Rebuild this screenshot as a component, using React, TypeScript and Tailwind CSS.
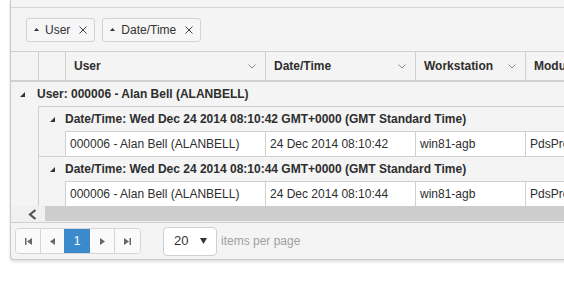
import React from "react";

const Collapse = () => (
  <svg width="5" height="5" viewBox="0 0 5 5" className="shrink-0">
    <polygon points="5,0 5,5 0,5" fill="#333" />
  </svg>
);

const Chevron = () => (
  <svg width="8" height="5" viewBox="0 0 8 5" className="shrink-0">
    <polyline points="0.5,0.5 4,4 7.5,0.5" fill="none" stroke="#8a8a8a" strokeWidth="1" />
  </svg>
);

const Chip = ({ label }: { label: string }) => (
  <div className="flex items-center h-[24px] px-[7px] border border-[#d3d3d3] rounded-[3px] bg-[#f6f6f6] text-[#333]">
    <svg width="5" height="3" viewBox="0 0 5 3" className="shrink-0">
      <polygon points="2.5,0 5,3 0,3" fill="#333" />
    </svg>
    <span className="ml-[6px] text-[12px]">{label}</span>
    <svg width="8" height="8" viewBox="0 0 8 8" className="ml-[9px] shrink-0">
      <path d="M0.5 0.5 L7.5 7.5 M7.5 0.5 L0.5 7.5" stroke="#444" strokeWidth="1" />
    </svg>
  </div>
);

const HeaderCell = ({ label, w }: { label: string; w: string }) => (
  <div className={`${w} flex items-center justify-between pl-[8px] pr-[9px] border-r border-[#d0d0d0] font-bold`}>
    <span>{label}</span>
    <Chevron />
  </div>
);

const DataRow = ({ time }: { time: string }) => (
  <div className="ml-[26px] h-[25px] flex bg-white border-l border-t border-[#d0d0d0]">
    <div className="w-[200px] shrink-0 flex items-center pl-[4px] border-r border-[#d0d0d0]">000006 - Alan Bell (ALANBELL)</div>
    <div className="w-[150px] shrink-0 flex items-center pl-[4px] border-r border-[#d0d0d0]">{time}</div>
    <div className="w-[110px] shrink-0 flex items-center pl-[4px] border-r border-[#d0d0d0]">win81-agb</div>
    <div className="flex-1 flex items-center pl-[4px]">PdsProcess</div>
  </div>
);

const SubGroup = ({ label }: { label: string }) => (
  <div className="h-[25px] flex items-center pl-[11px] border-t border-[#d0d0d0] font-bold">
    <Collapse />
    <span className="ml-[10px] whitespace-nowrap">{label}</span>
  </div>
);

const PagerBtn = ({ children, w, last }: { children: React.ReactNode; w: string; last?: boolean }) => (
  <div className={`${w} h-full flex items-center justify-center bg-[#fafafa] ${last ? "" : "border-r border-[#d5d5d5]"}`}>
    {children}
  </div>
);

export default function App() {
  return (
    <div className="w-[564px] h-[288px] overflow-hidden bg-white font-['Liberation_Sans',Arial,sans-serif] text-[12px] text-[#2e2e2e]">
      <div className="ml-[10px] w-[620px] bg-[#f4f4f4] border-l border-b border-[#c8c8c8] rounded-bl-[4px] shadow-[0_2px_3px_rgba(0,0,0,0.12)]">
        <div className="h-[8px] border-b border-[#d5d5d5]" />
        <div className="h-[43px] flex items-center gap-[7px] pl-[15px]">
          <Chip label="User" />
          <Chip label="Date/Time" />
        </div>
        <div className="h-[31px] flex border-t border-b-2 border-[#d0d0d0]">
          <div className="w-[28px] shrink-0 border-r border-[#d0d0d0]" />
          <div className="w-[27px] shrink-0 border-r border-[#d0d0d0]" />
          <HeaderCell label="User" w="w-[200px] shrink-0" />
          <HeaderCell label="Date/Time" w="w-[150px] shrink-0" />
          <HeaderCell label="Workstation" w="w-[110px] shrink-0" />
          <div className="flex-1 flex items-center pl-[8px] font-bold">Module</div>
        </div>
        <div className="h-[24px] flex items-center pl-[9px] font-bold">
          <Collapse />
          <span className="ml-[12px]">User: 000006 - Alan Bell (ALANBELL)</span>
        </div>
        <div className="ml-[27px] border-l border-[#d0d0d0]">
          <SubGroup label="Date/Time: Wed Dec 24 2014 08:10:42 GMT+0000 (GMT Standard Time)" />
          <DataRow time="24 Dec 2014 08:10:42" />
          <SubGroup label="Date/Time: Wed Dec 24 2014 08:10:44 GMT+0000 (GMT Standard Time)" />
          <DataRow time="24 Dec 2014 08:10:44" />
        </div>
        <div className="h-[16px] flex bg-[#f0f0f0]">
          <div className="w-[34px] shrink-0 flex items-center pl-[17px]">
            <svg width="9" height="11" viewBox="0 0 9 11">
              <polyline points="7.5,1 2,5.5 7.5,10" fill="none" stroke="#505050" strokeWidth="2.2" />
            </svg>
          </div>
          <div className="flex-1 bg-[#cdcdcd] mb-[1px]" />
        </div>
        <div className="h-[37px] flex items-center border-t border-[#d0d0d0] pl-[4px]">
          <div className="h-[26px] flex border border-[#d5d5d5] rounded-[4px] overflow-hidden">
            <PagerBtn w="w-[25px]">
              <svg width="7" height="7" viewBox="0 0 7 7">
                <rect x="0" y="0" width="1.5" height="7" fill="#666" />
                <polygon points="7,0 7,7 2,3.5" fill="#666" />
              </svg>
            </PagerBtn>
            <PagerBtn w="w-[23px]" last>
              <svg width="5" height="7" viewBox="0 0 5 7">
                <polygon points="5,0 5,7 0,3.5" fill="#666" />
              </svg>
            </PagerBtn>
            <div className="w-[26px] h-full flex items-center justify-center bg-[#3b8bcc] text-white">1</div>
            <PagerBtn w="w-[25px]">
              <svg width="5" height="7" viewBox="0 0 5 7">
                <polygon points="0,0 0,7 5,3.5" fill="#666" />
              </svg>
            </PagerBtn>
            <PagerBtn w="w-[25px]" last>
              <svg width="7" height="7" viewBox="0 0 7 7">
                <polygon points="0,0 0,7 5,3.5" fill="#666" />
                <rect x="5.5" y="0" width="1.5" height="7" fill="#666" />
              </svg>
            </PagerBtn>
          </div>
          <div className="ml-[22px] w-[54px] h-[29px] flex items-center justify-between pl-[10px] pr-[9px] bg-white border border-[#d0d0d0] rounded-[4px] text-[13px] text-[#333]">
            <span>20</span>
            <svg width="7" height="6" viewBox="0 0 7 6">
              <polygon points="0,0 7,0 3.5,6" fill="#333" />
            </svg>
          </div>
          <span className="ml-[4px] text-[#a0a0a0]">items per page</span>
        </div>
      </div>
    </div>
  );
}
